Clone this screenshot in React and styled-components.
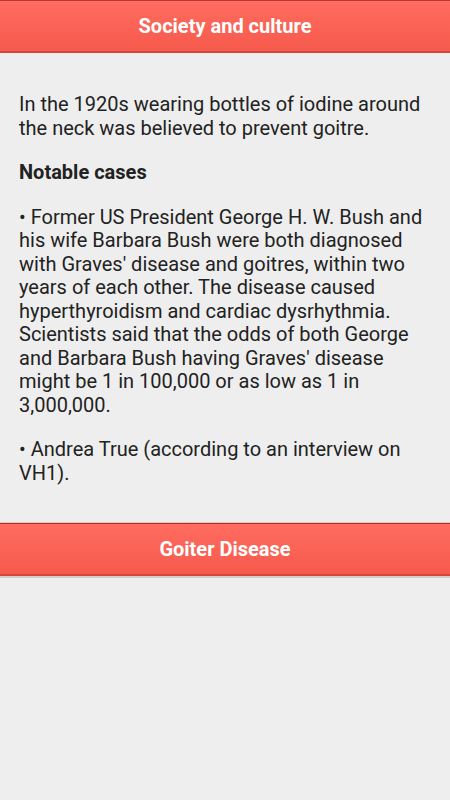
import React from "react";
import styled, { createGlobalStyle } from "styled-components";

const Global = createGlobalStyle`
  html, body { margin: 0; padding: 0; background: #eeeeee; }
  body { font-family: Roboto, "Noto Sans", sans-serif; }
`;

const Page = styled.div`
  min-height: 800px;
  background: #eeeeee;
  display: flex;
  flex-direction: column;
`;

const Bar = styled.div`
  height: 50px;
  display: flex;
  align-items: center;
  justify-content: center;
  color: #ffffff;
  font-weight: 700;
  font-size: 20px;
  background: linear-gradient(#ff6c60, #f65a4c);
  border-top: 1px solid ${(p) => (p.$bottom ? "#c0281e" : "#b8362b")};
  border-bottom: 2px solid #d4473b;
  box-shadow: ${(p) => (p.$bottom ? "0 -1px 0 #cfcfcf, 0 2px 0 #d0d0d0" : "none")};
`;

const Content = styled.div`
  padding: 40px 19px 38px 19px;
  color: #222222;
  font-size: 20px;
  line-height: 23.5px;
`;

const P = styled.p`
  margin: 0 0 ${(p) => (p.$gap === undefined ? 21 : p.$gap)}px 0;
`;

const H = styled.p`
  margin: 0 0 21px 0;
  font-weight: 700;
`;

export default function App() {
  return (
    <Page>
      <Global />
      <Bar>Society and culture</Bar>
      <Content>
        <P>In the 1920s wearing bottles of iodine around the neck was believed to prevent goitre.</P>
        <H>Notable cases</H>
        <P>
          • Former US President George H. W. Bush and his wife Barbara Bush were both diagnosed with
          Graves' disease and goitres, within two years of each other. The disease caused
          hyperthyroidism and cardiac dysrhythmia. Scientists said that the odds of both George and
          Barbara Bush having Graves' disease might be 1 in 100,000 or as low as 1 in 3,000,000.
        </P>
        <P $gap={0}>• Andrea True (according to an interview on VH1).</P>
      </Content>
      <Bar $bottom>Goiter Disease</Bar>
    </Page>
  );
}
